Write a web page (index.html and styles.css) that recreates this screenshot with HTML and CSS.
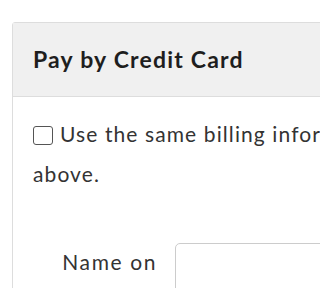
FILE: index.html
```html
<!DOCTYPE html>
<html>
<head>
<meta charset="utf-8">
<link rel="stylesheet" href="styles.css">
</head>
<body>
<div class="panel">
  <div class="panel-heading"><h3 class="panel-title">Pay by Credit Card</h3></div>
  <div class="panel-body">
    <p class="same"><span class="check"></span>Use the same billing information as above.</p>
    <div class="row">
      <label class="lbl">Name on</label>
      <div class="input"></div>
    </div>
  </div>
</div>
</body>
</html>
```
FILE: styles.css
```css
html, body { margin: 0; padding: 0; background: #fff; overflow: hidden; }
body { font-family: Lato, "Open Sans", sans-serif; color: #333; }
.panel {
  margin: 22px 0 0 12px;
  width: 560px;
  border: 1px solid #ddd;
  border-radius: 3px;
}
.panel-heading {
  background: #f0f0f0;
  border-bottom: 1px solid #ddd;
  padding: 23px 20px 24px;
}
.panel-title {
  margin: 0;
  font-size: 23px;
  line-height: 26px;
  letter-spacing: 1.2px;
  font-weight: 700;
  color: #1e1e1e;
}
.panel-body { padding: 17px 20px 0; }
.same {
  margin: 0;
  font-size: 21px;
  line-height: 40px;
  letter-spacing: 1.1px;
  width: 420px;
}
.check {
  display: inline-block;
  box-sizing: border-box;
  width: 20px;
  height: 19px;
  border: 1.6px solid #555;
  border-radius: 3px;
  margin-right: 7px;
  vertical-align: -3px;
}
.row {
  display: flex;
  margin-top: 48px;
  align-items: flex-start;
}
.lbl {
  width: 142px;
  text-align: right;
  font-size: 21px;
  line-height: 40px;
  letter-spacing: 1.6px;
  padding-right: 18px;
  box-sizing: border-box;
}
.input {
  flex: 1;
  height: 60px;
  border: 1px solid #ccc;
  border-radius: 5px;
  margin-top: 1px;
}
```
